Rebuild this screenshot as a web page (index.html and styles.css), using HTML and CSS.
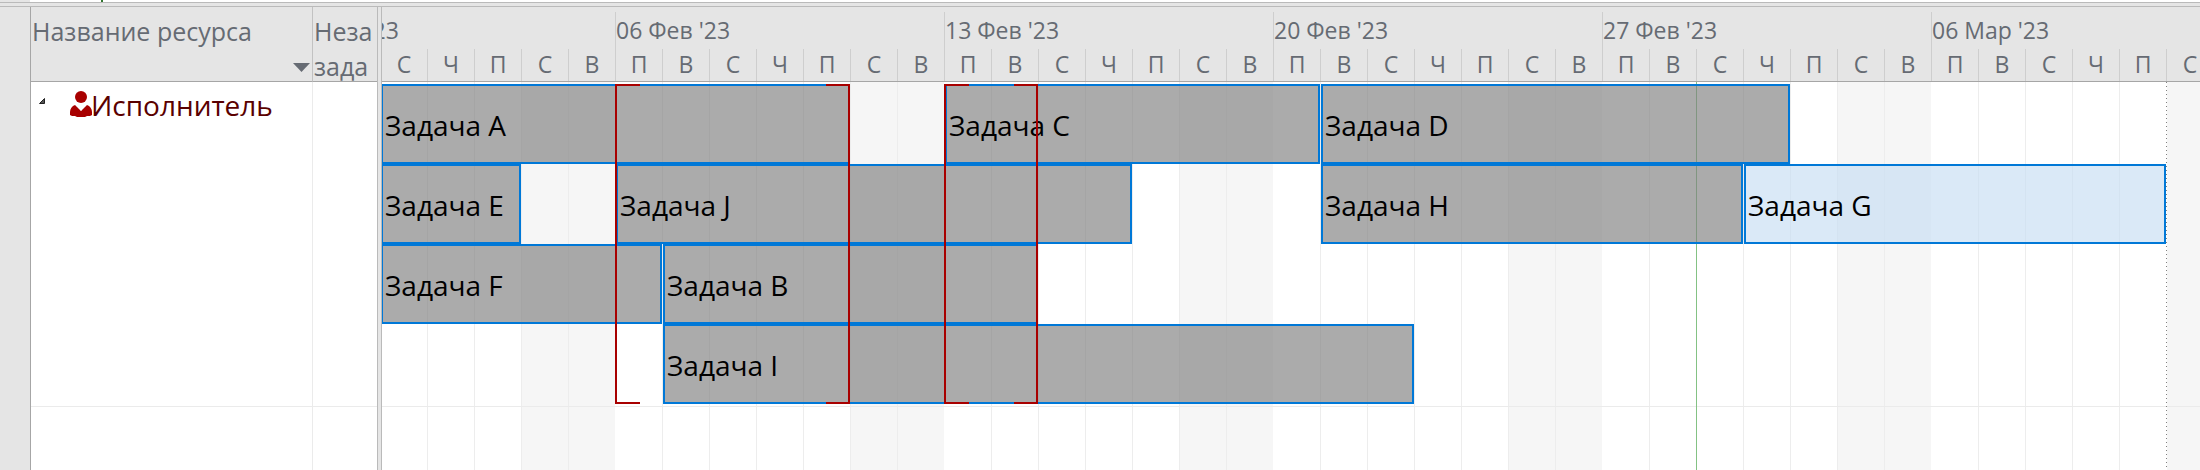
FILE: index.html
```html
<!DOCTYPE html>
<html lang="ru">
<head>
<meta charset="utf-8">
<title>Визуальный оптимизатор ресурсов</title>
<link rel="stylesheet" href="styles.css">
</head>
<body>
<div class="topbar"></div>
<main class="view">
  <div class="gutter"></div>
  <table class="resources">
    <thead>
      <tr>
        <th class="name-col" scope="col"><div class="head"><span>Название ресурса</span><button class="sort" type="button" aria-label="Сортировка"><svg width="17" height="9" viewBox="0 0 17 9"><path d="M0 0H17L8.500 9Z" fill="#666b73"/></svg></button></div></th>
        <th class="tasks-col" scope="col"><div class="head">Неза<br>зада</div></th>
      </tr>
    </thead>
    <tbody>
      <tr class="resource-row">
        <td class="name-col"><div class="resource">
          <button class="toggle" type="button" aria-label="Свернуть"><svg width="6" height="6" viewBox="0 0 6 6"><path d="M5.500 .5V5.500H.5Z" fill="#555" stroke="#222"/></svg></button>
          <svg class="person" width="22" height="26" viewBox="0 0 22 26"><circle cx="11" cy="6" r="6" fill="#a80000"/><path d="M5 14L11 20L17 14C20 15 22 18 22 21V24L20 25H17L15 26H7L5 25H2L0 24V21C0 18 2 15 5 14Z" fill="#a80000"/><path d="M8.500 15H13.500L11 20Z" fill="#fff"/></svg>
          <span>Исполнитель</span>
        </div></td>
        <td></td>
      </tr>
      <tr class="empty-row"><td class="name-col"></td><td></td></tr>
    </tbody>
  </table>
  <div class="splitter"></div>
  <section class="timeline">
    <div class="scale">
      <div class="weeks">
        <span>30 Янв '23</span><span>06 Фев '23</span><span>13 Фев '23</span><span>20 Фев '23</span><span>27 Фев '23</span><span>06 Мар '23</span>
      </div>
      <div class="days">
        <span></span><span></span><span>С</span><span>Ч</span><span>П</span><span>С</span><span>В</span>
        <span>П</span><span>В</span><span>С</span><span>Ч</span><span>П</span><span>С</span><span>В</span>
        <span>П</span><span>В</span><span>С</span><span>Ч</span><span>П</span><span>С</span><span>В</span>
        <span>П</span><span>В</span><span>С</span><span>Ч</span><span>П</span><span>С</span><span>В</span>
        <span>П</span><span>В</span><span>С</span><span>Ч</span><span>П</span><span>С</span><span>В</span>
        <span>П</span><span>В</span><span>С</span><span>Ч</span><span>П</span><span>С</span>
      </div>
    </div>
    <div class="chart">
      <div class="row-line"></div>
      <div class="today"></div>
      <div class="finish"></div>
      <div class="task task-a">Задача A</div>
      <div class="task task-c">Задача C</div>
      <div class="task task-d">Задача D</div>
      <div class="task task-e">Задача E</div>
      <div class="task task-j">Задача J</div>
      <div class="task task-h">Задача H</div>
      <div class="task task-g planned">Задача G</div>
      <div class="task task-f">Задача F</div>
      <div class="task task-b">Задача B</div>
      <div class="task task-i">Задача I</div>
      <div class="overload overload-1"></div>
      <div class="overload overload-2"></div>
    </div>
  </section>
</main>
</body>
</html>
```
FILE: styles.css
```css
* { box-sizing: border-box; }

body {
  margin: 0;
  height: 100vh;
  display: flex;
  flex-direction: column;
  overflow: hidden;
  background: #e5e5e5;
  color: #666b73;
  font-family: "Open Sans", "Noto Sans", sans-serif;
}

button { border: 0; padding: 0; background: none; display: flex; }

.topbar {
  flex: none;
  height: 7px;
  border-bottom: 1px solid #bababa;
  background: linear-gradient(#bababa, #bababa) 0 2px / 100% 1px no-repeat;
}
.topbar::before {
  content: "";
  display: block;
  height: 2px;
  margin-left: 30px;
  background: linear-gradient(90deg, transparent 71px, #31752f 71px, #31752f 73px, transparent 73px) #fff;
}

.view { flex: 1; min-height: 0; display: flex; }

.gutter { flex: none; width: 30px; }

.resources {
  flex: none;
  width: 347px;
  height: 100%;
  border-collapse: separate;
  border-spacing: 0;
  table-layout: fixed;
  border-left: 1px solid #a6a6a6;
  background: #fff;
}
.resources th {
  height: 75px;
  padding: 0;
  background: #e5e5e5;
  border-bottom: 1px solid #a6a6a6;
  font-weight: 400;
  font-size: 25px;
  line-height: 35px;
  text-align: left;
  vertical-align: top;
}
.resources .name-col { width: 282px; border-right: 1px solid #ebebeb; }
.resources th.name-col { border-right-color: #c2c2c2; }
.resources td { padding: 0; vertical-align: top; }
.resource-row { height: 325px; }
.resource-row td { border-bottom: 1px solid #ebebeb; }
.head { height: 74px; padding: 7px 0 0 1px; white-space: nowrap; }
.name-col .head { display: flex; justify-content: space-between; padding-right: 2px; }
.sort { align-self: flex-end; margin-bottom: 9px; }

.resource {
  display: flex;
  align-items: flex-start;
  padding: 6px 0 0 8px;
  color: #5a0000;
  font-size: 28px;
  line-height: 34px;
}
.toggle { margin-top: 10px; }
.person { margin: 3px 0 0 25px; }
.resource span { margin-left: -1px; }

.splitter {
  flex: none;
  width: 5px;
  border: solid #bababa;
  border-width: 0 1px;
}

.timeline {
  flex: 1;
  min-width: 0;
  overflow: hidden;
  display: flex;
  flex-direction: column;
}

/* The view is scrolled two days into the first week. */
.scale, .chart { margin-left: -95px; }

.scale { flex: none; height: 75px; padding-top: 5px; border-bottom: 1px solid #a6a6a6; }
.weeks, .days { display: grid; }
.weeks {
  grid-template-columns: repeat(6, 329px);
  height: 37px;
  font-size: 23px;
  line-height: 36px;
}
.weeks span { box-shadow: -1px 0 #cecece; }
.days {
  grid-template-columns: repeat(41, 47px);
  height: 32px;
  font-size: 23px;
  line-height: 30px;
  text-align: center;
}
.days span { border-right: 1px solid #cecece; }

.chart {
  flex: 1;
  display: grid;
  grid-template-columns: repeat(41, 47px);
  grid-template-rows: 2px repeat(4, 80px) 3px 1fr;
  background: #fff linear-gradient(90deg,
    transparent 46px, #ededed 46px 47px,
    transparent 47px 93px, #ededed 93px 94px,
    transparent 94px 140px, #ededed 140px 141px,
    transparent 141px 187px, #ededed 187px 188px,
    transparent 188px 234px, #ededed 234px 235px,
    #f6f6f6 235px 281px, #ededed 281px 282px,
    #f6f6f6 282px 328px, #fff 328px) 0 0 / 329px 100% repeat-x;
}

.row-line { grid-area: 1 / 1 / 7 / -1; border-bottom: 1px solid #ebebeb; }
.today { grid-area: 1 / 30 / -1 / 31; border-right: 1px solid #84c284; }
.finish {
  grid-area: 1 / 40 / -1 / 41;
  background: repeating-linear-gradient(#808080 0 1px, #fff 1px 4px) right / 1px 100% no-repeat;
}

.task {
  margin-right: 1px;
  padding-left: 2px;
  border: 2px solid #0078d7;
  background: rgba(128, 128, 128, .66);
  color: #000;
  font-size: 28px;
  line-height: 78px;
  white-space: nowrap;
}
.planned { background: rgba(199, 222, 243, .66); }

.task-a { grid-area: 2 / 3 / 3 / 13; }
.task-c { grid-area: 2 / 15 / 3 / 23; }
.task-d { grid-area: 2 / 23 / 3 / 33; }
.task-e { grid-area: 3 / 3 / 4 / 6; }
.task-j { grid-area: 3 / 8 / 4 / 19; }
.task-h { grid-area: 3 / 23 / 4 / 32; }
.task-g { grid-area: 3 / 32 / 4 / 41; }
.task-f { grid-area: 4 / 3 / 5 / 9; }
.task-b { grid-area: 4 / 9 / 5 / 17; }
.task-i { grid-area: 5 / 9 / 6 / 25; }

/* Bracket pair: full-height sides with short caps at the corners. */
.overload {
  --c: linear-gradient(#a80000, #a80000);
  margin: 0 1px 0 -1px;
  border: solid #a80000;
  border-width: 0 2px;
  background:
    var(--c) left top / 23px 2px no-repeat,
    var(--c) right top / 22px 2px no-repeat,
    var(--c) left bottom / 23px 2px no-repeat,
    var(--c) right bottom / 22px 2px no-repeat;
  background-origin: padding-box;
}
.overload-1 { grid-area: 2 / 8 / 6 / 13; }
.overload-2 { grid-area: 2 / 15 / 6 / 17; }
```
